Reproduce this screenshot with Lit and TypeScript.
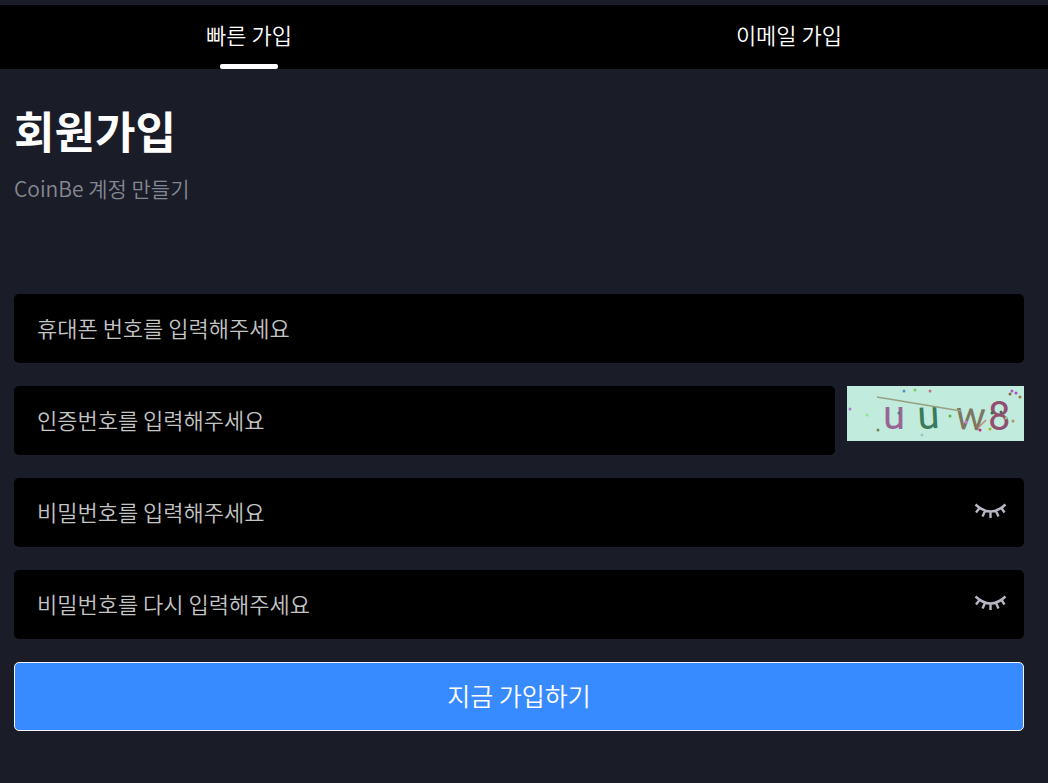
import { LitElement, html, svg, css } from "lit";
import { customElement, state } from "lit/decorators.js";

const letters = [
  { ch: "u", x: 36, y: 43, angle: 0, color: "#9a6595" },
  { ch: "u", x: 71, y: 43, angle: -3, color: "#387a5b" },
  { ch: "w", x: 108, y: 43, angle: 3, color: "#7d7660" },
  { ch: "8", x: 141, y: 44, angle: 0, color: "#914f70" },
];

const dots = [
  [57, 5, "#4b96c6"], [68, 4, "#79cf62"], [83, 5, "#bd7584"], [3, 23, "#b27cc4"],
  [20, 29, "#86e88e"], [31, 44, "#6f8453"], [52, 27, "#5b786f"], [75, 49, "#a2bfd0"],
  [103, 30, "#55b842"], [119, 36, "#d674e1"], [133, 44, "#c3268b"], [143, 43, "#8cbd25"],
  [145, 27, "#287347"], [154, 26, "#54654e"], [159, 32, "#92bd83"], [166, 35, "#a99b57"],
  [165, 5, "#b353c4"], [169, 7, "#a74dca"], [163, 8, "#83683b"], [173, 11, "#9b7348"],
] as const;

@customElement("app-root")
export class AppRoot extends LitElement {
  static styles = css`
    :host {
      display: block;
      min-height: 100vh;
      box-sizing: border-box;
      padding-top: 5px;
      background: #1a1c27;
      color: #fff;
      font-family: "Noto Sans CJK KR", sans-serif;
      font-size: 22px;
      line-height: 32px;
    }
    * { box-sizing: border-box; }
    button, input { font: inherit; color: inherit; margin: 0; }
    button { border: 0; padding: 0; background: none; cursor: pointer; }
    .tabs {
      display: flex;
      justify-content: space-around;
      gap: 32px;
      height: 64px;
      background: #000;
    }
    .tab {
      display: flex;
      flex-direction: column;
      align-items: center;
      justify-content: space-between;
      padding-top: 13px;
      font-weight: 350;
    }
    .tab::after {
      content: "";
      width: 58px;
      height: 5px;
      border-radius: 2px;
    }
    .tab[aria-selected="true"]::after { background: #fff; }
    main { padding: 27px 24px 52px 14px; }
    h1 { margin: 0; font-size: 44px; line-height: 68px; font-weight: 700; }
    .intro { margin: 8px 0 0; font-size: 21px; font-weight: 350; color: #858792; }
    form { display: grid; gap: 23px; margin-top: 90px; }
    .row { display: flex; align-items: flex-start; gap: 12px; }
    .field {
      display: flex;
      align-items: center;
      flex: 1;
      height: 69px;
      padding: 0 16px 4px 0;
      border-radius: 5px;
      background: #000;
    }
    .input {
      flex: 1;
      min-width: 0;
      height: 100%;
      padding: 0 0 0 23px;
      border: 0;
      outline: 0;
      background: none;
      font-weight: 350;
    }
    .input::placeholder { color: #c4c4c4; opacity: 1; }
    .eye, .captcha { display: block; line-height: 0; }
    .code { font-family: Roboto, sans-serif; font-size: 40px; }
    .submit {
      height: 69px;
      padding-bottom: 4px;
      border: 1px solid #f4f4f4;
      border-radius: 5px;
      background: #388bff;
      font-size: 25px;
      font-weight: 350;
    }
  `;

  @state() private tab = 0;
  @state() private shown = [false, false];

  private toggle(i: number) {
    this.shown = this.shown.map((v, n) => (n === i ? !v : v));
  }

  private password(i: number, text: string) {
    return html`<div class="field">
      <input class="input" type=${this.shown[i] ? "text" : "password"} placeholder=${text} aria-label=${text} />
      <button class="eye" type="button" aria-label="비밀번호 표시" @click=${() => this.toggle(i)}>
        <svg width="34" height="20" viewBox="0 0 34 20" fill="none" stroke="#b7b6c2" stroke-width="2.400">
          <path d="M1.500 3.500Q16.500 17.500 31.500 3.500M5.500 7L2 11.500M11 10L8.500 15.500M16.500 11V17M22 10L24.500 15.500M27.500 7L30.500 11.500" />
        </svg>
      </button>
    </div>`;
  }

  render() {
    return html`
      <div class="tabs" role="tablist">
        ${["빠른 가입", "이메일 가입"].map(
          (name, i) => html`<button class="tab" role="tab" aria-selected=${this.tab === i ? "true" : "false"}
            @click=${() => (this.tab = i)}>${name}</button>`
        )}
      </div>
      <main>
        <h1>회원가입</h1>
        <p class="intro">CoinBe 계정 만들기</p>
        <form @submit=${(e: Event) => e.preventDefault()}>
          <div class="field">
            <input class="input" type="tel" placeholder="휴대폰 번호를 입력해주세요" aria-label="휴대폰 번호를 입력해주세요" />
          </div>
          <div class="row">
            <div class="field">
              <input class="input" type="text" placeholder="인증번호를 입력해주세요" aria-label="인증번호를 입력해주세요" />
            </div>
            <button class="captcha" type="button" aria-label="인증번호 새로고침">
              <svg width="177" height="55" viewBox="0 0 177 55">
                <rect width="177" height="55" fill="#c1ebdc" />
                ${letters.map(
                  (l) => svg`<text class="code" x=${l.x} y=${l.y} rotate=${l.angle} fill=${l.color}>${l.ch}</text>`
                )}
                <path d="M30 11L114 25" stroke="#96a183" stroke-width="1.500" />
                <path d="M131 42L139 34" stroke="#c78370" stroke-width="1.500" />
                ${dots.map(([x, y, c]) => svg`<circle cx=${x} cy=${y} r="1.500" fill=${c} />`)}
              </svg>
            </button>
          </div>
          ${this.password(0, "비밀번호를 입력해주세요")}
          ${this.password(1, "비밀번호를 다시 입력해주세요")}
          <button class="submit" type="submit">지금 가입하기</button>
        </form>
      </main>
    `;
  }
}
